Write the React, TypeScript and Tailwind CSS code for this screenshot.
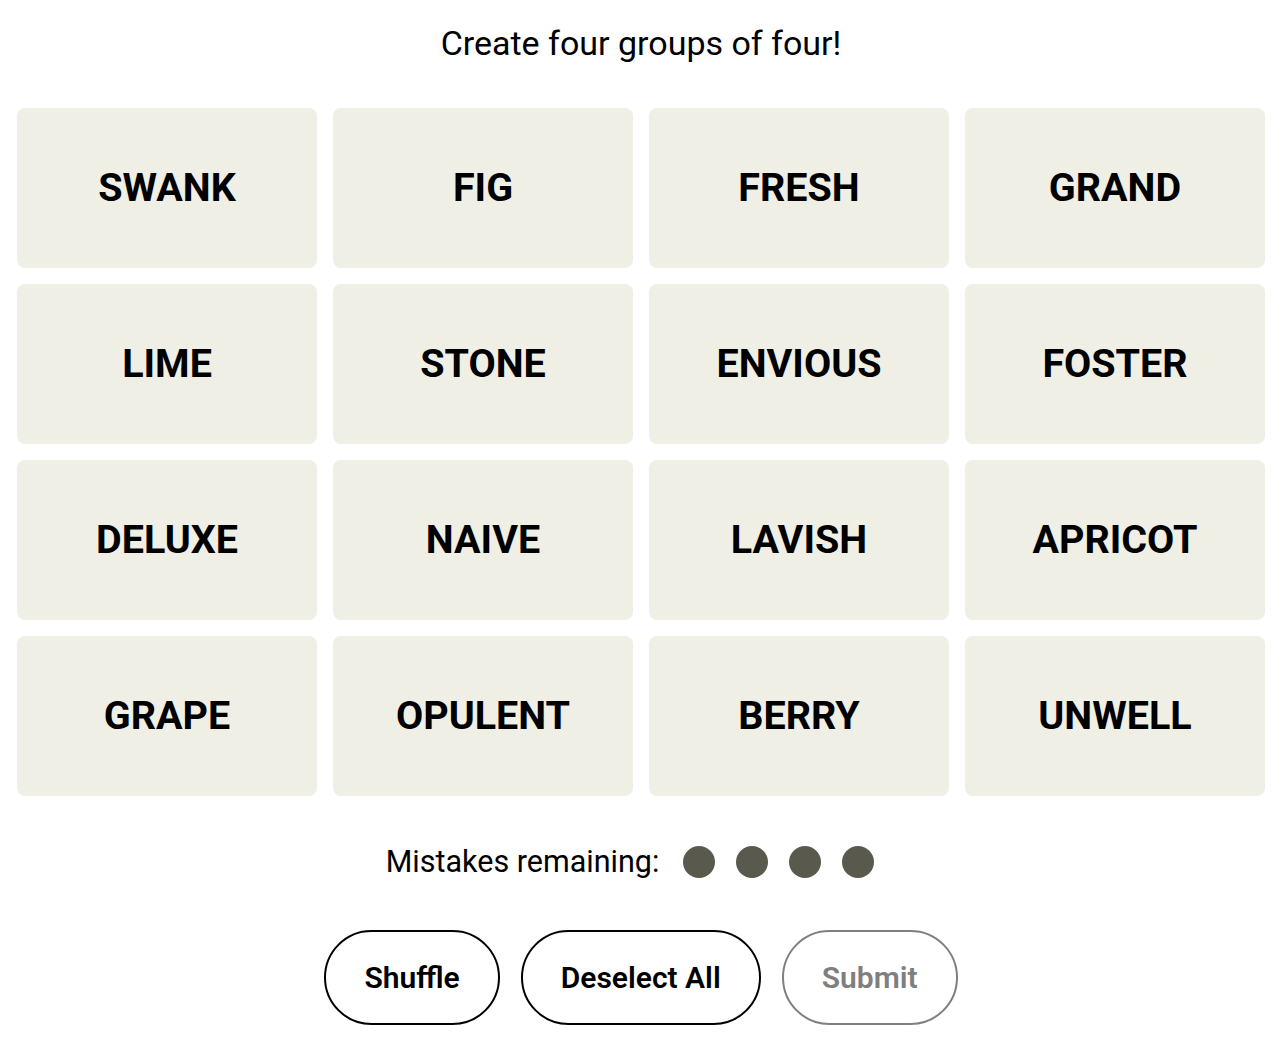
import React from 'react'

const words = [
  'SWANK', 'FIG', 'FRESH', 'GRAND',
  'LIME', 'STONE', 'ENVIOUS', 'FOSTER',
  'DELUXE', 'NAIVE', 'LAVISH', 'APRICOT',
  'GRAPE', 'OPULENT', 'BERRY', 'UNWELL',
]

export default function App() {
  return (
    <div className="min-h-screen bg-white text-black font-['Roboto','Liberation_Sans',sans-serif]">
      <div className="w-[1248px] ml-[17px] flex flex-col items-center">
        <h2 className="mt-[23px] text-[34px] leading-[40px] font-normal">Create four groups of four!</h2>

        <div className="mt-[45px] grid grid-cols-4 gap-4 w-full">
          {words.map((w) => (
            <button
              key={w}
              className="h-[160px] rounded-lg bg-[#efefe6] flex items-center justify-center text-[39.5px] font-bold leading-none uppercase"
            >
              {w}
            </button>
          ))}
        </div>

        <div className="mt-[46px] h-10 pr-[22px] flex items-center">
          <span className="text-[30.5px] leading-10">Mistakes remaining:</span>
          <div className="ml-[24px] flex gap-[21px]">
            {[0, 1, 2, 3].map((i) => (
              <span key={i} className="w-[32px] h-[32px] rounded-full bg-[#5a594e]" />
            ))}
          </div>
        </div>

        <div className="mt-[48px] flex gap-[21px]">
          <button className="h-[95px] px-[38px] rounded-full border-2 border-black text-[30px] font-semibold">Shuffle</button>
          <button className="h-[95px] px-[38px] rounded-full border-2 border-black text-[30px] font-semibold">Deselect All</button>
          <button className="h-[95px] px-[38px] rounded-full border-2 border-[#7f7f7f] text-[#7f7f7f] text-[30px] font-semibold">Submit</button>
        </div>
      </div>
    </div>
  )
}
